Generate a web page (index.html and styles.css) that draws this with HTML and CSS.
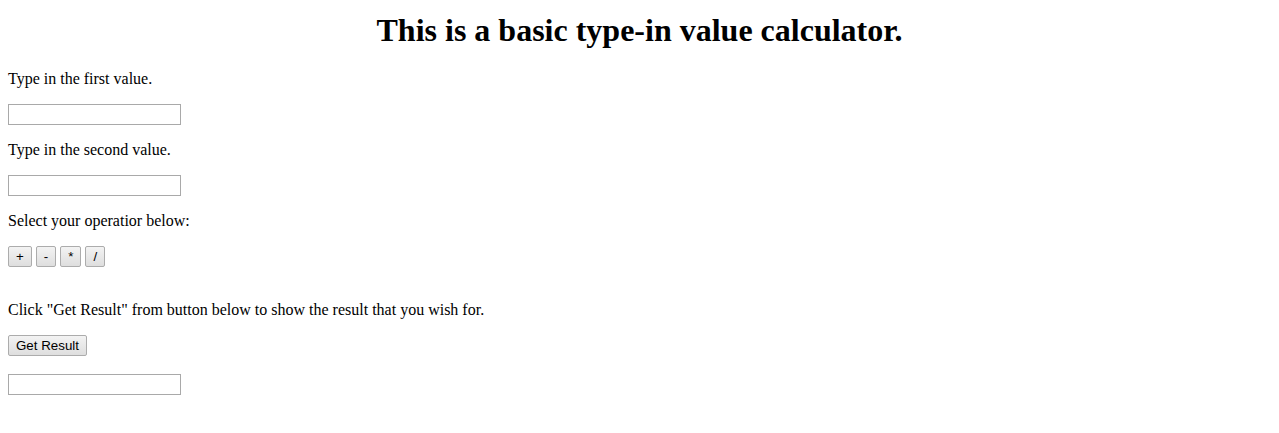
FILE: index.html
```html
<!DOCTYPE html>
<html lang="en">
<head>
<meta charset="utf-8">
<title>Calculator</title>
<link rel="stylesheet" href="styles.css">
</head>
<body>
<h1 class="title">This is a basic type-in value calculator.</h1>
<p class="label">Type in the first value.</p>
<input class="field" type="text">
<p class="label">Type in the second value.</p>
<input class="field" type="text">
<p class="label">Select your operatior below:</p>
<div class="ops">
  <button class="btn">+</button>
  <button class="btn">-</button>
  <button class="btn">*</button>
  <button class="btn">/</button>
</div>
<p class="label">Click "Get Result" from button below to show the result that you wish for.</p>
<div class="result-row">
  <button class="btn">Get Result</button>
</div>
<input class="field result" type="text">
</body>
</html>
```

FILE: styles.css
```css
html, body {
  background: #ffffff;
}

body {
  margin: 0;
  padding: 12px 8px 8px;
  font-family: "Liberation Serif", "Times New Roman", serif;
  font-size: 16px;
  color: #000000;
}

.title {
  margin: 0 0 21px;
  font-size: 32px;
  font-weight: bold;
  text-align: center;
}

.label {
  margin: 16px 0;
}

.field {
  display: block;
  box-sizing: border-box;
  width: 173px;
  height: 21px;
  margin: 0;
  padding: 1px 2px;
  border: 1px solid #a9a9a9;
  background: #ffffff;
  font-family: "Liberation Sans", Arial, sans-serif;
  font-size: 13.33px;
}

.ops {
  display: flex;
  gap: 4px;
  margin: 16px 0 34px;
}

.result-row {
  display: flex;
  margin: 16px 0 18px;
}

.btn {
  box-sizing: border-box;
  height: 21px;
  margin: 0;
  padding: 1px 7px;
  border: 1px solid #acacac;
  border-radius: 2px;
  background: linear-gradient(#f3f3f3, #dedede);
  color: #000000;
  font-family: "Liberation Sans", Arial, sans-serif;
  font-size: 13.33px;
  line-height: 15px;
}
```
